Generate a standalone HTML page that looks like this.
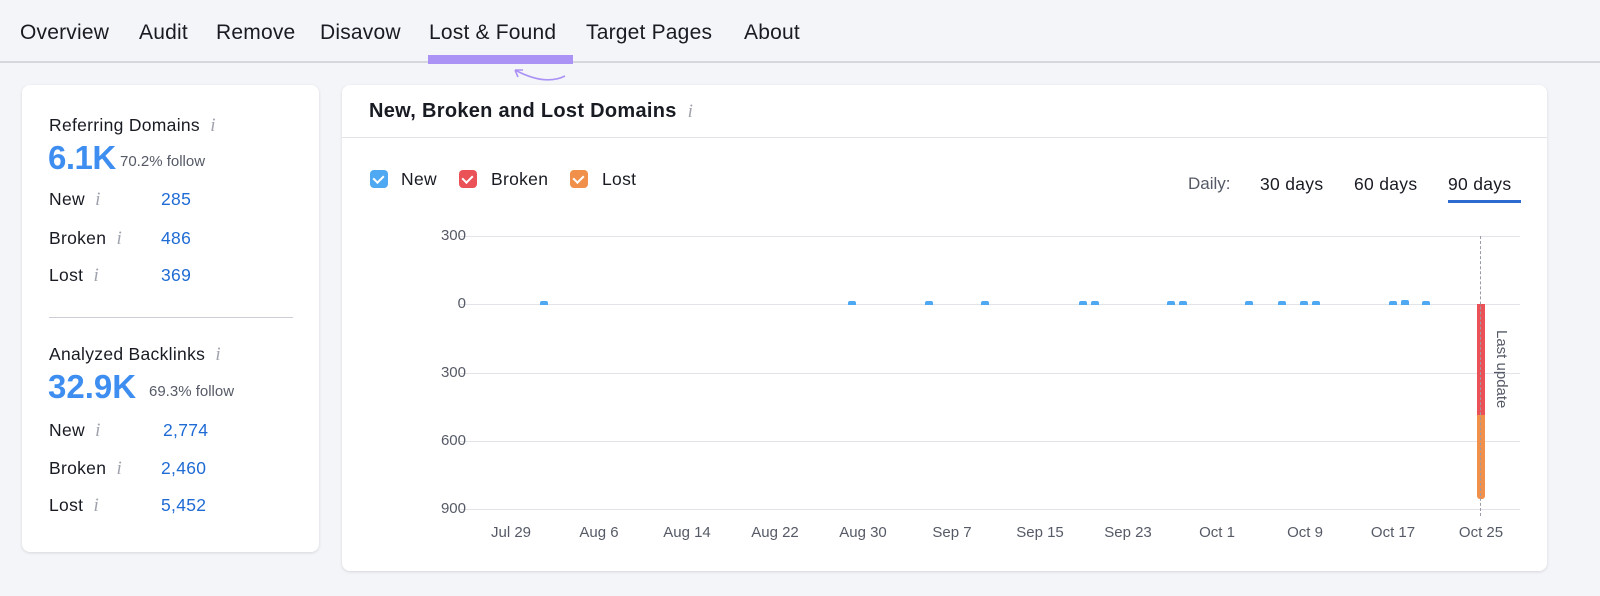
<!DOCTYPE html><html><head><style>
body{margin:0;width:1600px;height:596px;background:#f4f5f9;font-family:"Liberation Sans",sans-serif;position:relative;overflow:hidden;color:#191b23}
.a{position:absolute;white-space:nowrap}
.nav{font-size:21px;top:21px;letter-spacing:0.2px}
.card{position:absolute;background:#fff;border-radius:8px;box-shadow:0 1px 3px rgba(0,0,0,.12)}
.i{color:#a0a3ad;font-style:italic;font-family:"Liberation Serif",serif;font-size:19px}
.l{font-size:17.5px;letter-spacing:0.3px}
.n{font-size:17.5px;color:#1f6bd4;letter-spacing:0.3px}
.yl{font-size:15px;color:#555a66;width:40px;text-align:right}
.xl{font-size:15px;color:#555a66;top:524px;transform:translateX(-50%)}
.g{position:absolute;left:460px;width:1060px;height:1px;background:#e3e4ea}
.b{position:absolute;width:8px;height:4px;top:301px;background:#4fa8f2;border-radius:2px 2px 0 0}
.cb{position:absolute;width:18px;height:18px;border-radius:4px;top:170px}
.cb:after{content:"";position:absolute;left:5px;top:3px;width:5px;height:8px;border:solid #fff;border-width:0 2px 2px 0;transform:rotate(45deg)}
</style></head><body>
<div class="a nav" style="left:20px">Overview</div>
<div class="a nav" style="left:139px">Audit</div>
<div class="a nav" style="left:216px">Remove</div>
<div class="a nav" style="left:320px">Disavow</div>
<div class="a nav" style="left:429px">Lost &amp; Found</div>
<div class="a nav" style="left:586px">Target Pages</div>
<div class="a nav" style="left:744px">About</div>
<div class="a" style="left:0;top:61px;width:1600px;height:2px;background:#d6d7de"></div>
<div class="a" style="left:428px;top:55px;width:145px;height:9px;background:#ab92f5"></div>
<svg class="a" style="left:505px;top:64px" width="62" height="20"><path d="M60 12 Q40 22 10 6 M10 6 L18 6 M10 6 L13 13" stroke="#ab92f5" stroke-width="1.6" fill="none"/></svg>

<div class="card" style="left:22px;top:85px;width:297px;height:467px"></div>
<div class="a l" style="left:49px;top:115px">Referring Domains <span class="i">&nbsp;i</span></div>
<div class="a" style="left:48px;top:139px;font-size:33px;font-weight:bold;color:#3d8ef0;letter-spacing:-0.5px">6.1K</div>
<div class="a" style="left:120px;top:153px;font-size:15px;color:#555a66">70.2% follow</div>
<div class="a l" style="left:49px;top:189px">New <span class="i">&nbsp;i</span></div><div class="a n" style="left:161px;top:189px">285</div>
<div class="a l" style="left:49px;top:228px">Broken <span class="i">&nbsp;i</span></div><div class="a n" style="left:161px;top:228px">486</div>
<div class="a l" style="left:49px;top:265px">Lost <span class="i">&nbsp;i</span></div><div class="a n" style="left:161px;top:265px">369</div>
<div class="a" style="left:49px;top:317px;width:244px;height:1px;background:#ccced6"></div>
<div class="a l" style="left:49px;top:344px">Analyzed Backlinks <span class="i">&nbsp;i</span></div>
<div class="a" style="left:48px;top:368px;font-size:33px;font-weight:bold;color:#3d8ef0;letter-spacing:0px">32.9K</div>
<div class="a" style="left:149px;top:383px;font-size:15px;color:#555a66">69.3% follow</div>
<div class="a l" style="left:49px;top:420px">New <span class="i">&nbsp;i</span></div><div class="a n" style="left:163px;top:420px">2,774</div>
<div class="a l" style="left:49px;top:458px">Broken <span class="i">&nbsp;i</span></div><div class="a n" style="left:161px;top:458px">2,460</div>
<div class="a l" style="left:49px;top:495px">Lost <span class="i">&nbsp;i</span></div><div class="a n" style="left:161px;top:495px">5,452</div>

<div class="card" style="left:342px;top:85px;width:1205px;height:486px"></div>
<div class="a" style="left:369px;top:100px;font-size:20px;font-weight:bold;letter-spacing:0.3px">New, Broken and Lost Domains <span class="i" style="font-weight:normal">&nbsp;i</span></div>
<div class="a" style="left:342px;top:137px;width:1205px;height:1px;background:#e3e4ea"></div>
<div class="cb" style="left:370px;background:#4fa8f2"></div><div class="a l" style="left:401px;top:169px">New</div>
<div class="cb" style="left:459px;background:#ea5258"></div><div class="a l" style="left:491px;top:169px">Broken</div>
<div class="cb" style="left:570px;background:#f0904a"></div><div class="a l" style="left:602px;top:169px">Lost</div>
<div class="a" style="left:1188px;top:174px;font-size:17px;color:#555a66">Daily:</div>
<div class="a l" style="left:1260px;top:174px">30 days</div>
<div class="a l" style="left:1354px;top:174px">60 days</div>
<div class="a l" style="left:1448px;top:174px">90 days</div>
<div class="a" style="left:1448px;top:200px;width:73px;height:3px;background:#2e6bd1"></div>

<div class="g" style="top:236px"></div><div class="g" style="top:304px"></div><div class="g" style="top:373px"></div><div class="g" style="top:441px"></div><div class="g" style="top:509px"></div>
<div class="a yl" style="left:426px;top:227px">300</div>
<div class="a yl" style="left:426px;top:295px">0</div>
<div class="a yl" style="left:426px;top:364px">300</div>
<div class="a yl" style="left:426px;top:432px">600</div>
<div class="a yl" style="left:426px;top:500px">900</div>
<div class="a xl" style="left:511px">Jul 29</div><div class="a xl" style="left:599px">Aug 6</div><div class="a xl" style="left:687px">Aug 14</div><div class="a xl" style="left:775px">Aug 22</div><div class="a xl" style="left:863px">Aug 30</div><div class="a xl" style="left:952px">Sep 7</div><div class="a xl" style="left:1040px">Sep 15</div><div class="a xl" style="left:1128px">Sep 23</div><div class="a xl" style="left:1217px">Oct 1</div><div class="a xl" style="left:1305px">Oct 9</div><div class="a xl" style="left:1393px">Oct 17</div><div class="a xl" style="left:1481px">Oct 25</div>
<div class="b" style="left:540px"></div><div class="b" style="left:848px"></div><div class="b" style="left:925px"></div><div class="b" style="left:981px"></div><div class="b" style="left:1079px"></div><div class="b" style="left:1091px"></div><div class="b" style="left:1167px"></div><div class="b" style="left:1179px"></div><div class="b" style="left:1245px"></div><div class="b" style="left:1278px"></div><div class="b" style="left:1300px"></div><div class="b" style="left:1312px"></div><div class="b" style="left:1389px"></div><div class="b" style="left:1401px;height:5px;top:300px"></div><div class="b" style="left:1422px"></div>
<div class="a" style="left:1477px;top:304px;width:8px;height:111px;background:#ea5258"></div>
<div class="a" style="left:1477px;top:415px;width:8px;height:84px;background:#f0904a;border-radius:0 0 3px 3px"></div>
<div class="a" style="left:1480px;top:236px;height:280px;border-left:1px dashed #9a9ca5"></div>
<div class="a" style="left:1493px;top:330px;font-size:15px;color:#555a66;writing-mode:vertical-rl">Last update</div>
</body></html>
